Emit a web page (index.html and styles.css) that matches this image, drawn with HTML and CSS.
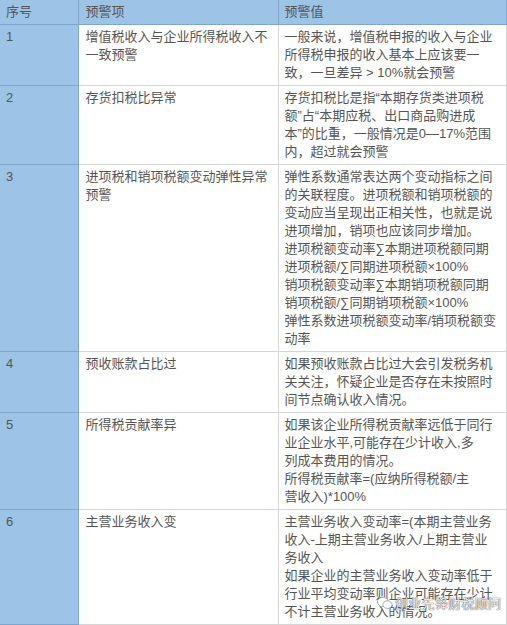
FILE: index.html
```html
<!DOCTYPE html>
<html lang="zh">
<head>
<meta charset="utf-8">
<link rel="stylesheet" href="styles.css">
</head>
<body>
<div class="wrap">
<table class="tbl">
  <colgroup><col class="c1"><col class="c2"><col class="c3"></colgroup>
  <thead>
    <tr><th class="num">序号</th><th>预警项</th><th>预警值</th></tr>
  </thead>
  <tbody>
    <tr class="r1"><td class="num">1</td><td>增值税收入与企业所得税收入不一致预警</td><td>一般来说，增值税申报的收入与企业所得税申报的收入基本上应该要一致，一旦差异 &gt; 10%就会预警</td></tr>
    <tr class="r2"><td class="num">2</td><td>存货扣税比异常</td><td>存货扣税比是指“本期存货类进项税<br>额”占“本期应税、出口商品购进成<br>本”的比重，一般情况是0—17%范围<br>内，超过就会预警</td></tr>
    <tr class="r3"><td class="num">3</td><td>进项税和销项税额变动弹性异常预警</td><td>弹性系数通常表达两个变动指标之间的关联程度。进项税额和销项税额的变动应当呈现出正相关性，也就是说进项增加，销项也应该同步增加。<br>进项税额变动率∑本期进项税额同期<br>进项税额/∑同期进项税额×100%<br>销项税额变动率∑本期销项税额同期<br>销项税额/∑同期销项税额×100%<br>弹性系数进项税额变动率/销项税额变动率</td></tr>
    <tr class="r4"><td class="num">4</td><td>预收账款占比过</td><td>如果预收账款占比过大会引发税务机关关注，怀疑企业是否存在未按照时间节点确认收入情况。</td></tr>
    <tr class="r5"><td class="num">5</td><td>所得税贡献率异</td><td>如果该企业所得税贡献率远低于同行<br>业企业水平,可能存在少计收入,多<br>列成本费用的情况。<br>所得税贡献率=(应纳所得税额/主<br>营收入)*100%</td></tr>
    <tr class="r6"><td class="num">6</td><td>主营业务收入变</td><td>主营业务收入变动率=(本期主营业务<br>收入-上期主营业务收入/上期主营业<br>务收入<br>如果企业的主营业务收入变动率低于<br>行业平均变动率则企业可能存在少计<br>不计主营业务收入的情况。</td></tr>
  </tbody>
</table>
<div class="watermark">
  <svg class="wm-icon" width="16" height="14" viewBox="0 0 16 14"><ellipse cx="6" cy="6" rx="5.5" ry="4.6" fill="#fff" stroke="#999" stroke-width="0.8"/><ellipse cx="10.5" cy="8.6" rx="4.6" ry="3.8" fill="#fff" stroke="#999" stroke-width="0.8"/></svg>
  <span class="wm-text">创业先锋财税顾问</span>
</div>
</div>
</body>
</html>
```
FILE: styles.css
```css
html, body {
  margin: 0;
  padding: 0;
  background: #f2f2f2;
}
.wrap {
  position: relative;
  width: 506px;
  background: #fff;
}
.tbl {
  width: 506px;
  border-collapse: collapse;
  table-layout: fixed;
  font-family: "Liberation Sans", "Noto Sans CJK SC", sans-serif;
  font-size: 13px;
  line-height: 18px;
  color: #555;
}
.c1 { width: 78px; }
.c2 { width: 200px; }
.c3 { width: 228px; }
.tbl th, .tbl td {
  padding: 3px 6px 3px 6px;
  text-align: left;
  vertical-align: top;
  font-weight: normal;
  border: 1px solid #d6d6d6;
  word-break: break-all;
}
.tbl th {
  background: #9dc3e6;
  border-color: #7fa6cd;
  border-top: none;
}
.tbl th:first-child, .tbl td:first-child { border-left: none; }
.tbl td.num {
  background: #9dc3e6;
  border-color: #7fa6cd;
}
.tbl td:nth-child(2), .tbl th:nth-child(2) { padding-left: 7px; }
.watermark {
  position: absolute;
  left: 377px;
  top: 594px;
  display: flex;
  align-items: center;
  gap: 2px;
}
.wm-text {
  font-family: "Noto Sans CJK SC", sans-serif;
  font-size: 13px;
  line-height: 18px;
  color: rgba(255,255,255,0.9);
  text-shadow: 0 0 1px #555, 0 0 1px #555;
  letter-spacing: 0.3px;
}
```
